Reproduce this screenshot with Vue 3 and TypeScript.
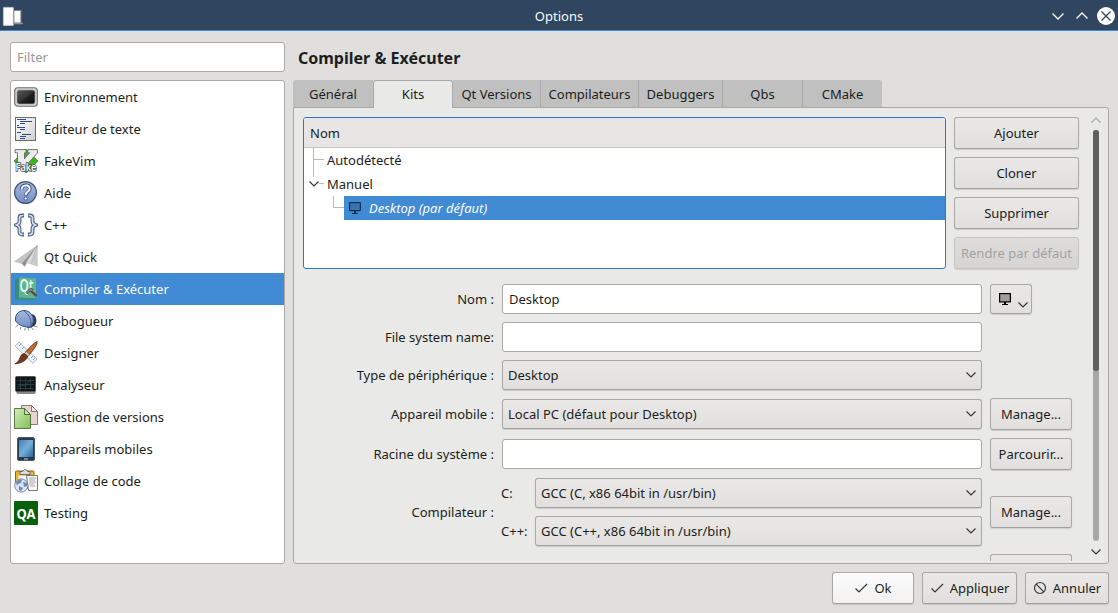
<script setup lang="ts">
import { ref } from 'vue'

interface Category { id: string; label: string }

const categories: Category[] = [
  { id: 'env', label: 'Environnement' },
  { id: 'text', label: 'Éditeur de texte' },
  { id: 'vim', label: 'FakeVim' },
  { id: 'help', label: 'Aide' },
  { id: 'cpp', label: 'C++' },
  { id: 'quick', label: 'Qt Quick' },
  { id: 'build', label: 'Compiler & Exécuter' },
  { id: 'debug', label: 'Débogueur' },
  { id: 'design', label: 'Designer' },
  { id: 'analyze', label: 'Analyseur' },
  { id: 'vcs', label: 'Gestion de versions' },
  { id: 'devices', label: 'Appareils mobiles' },
  { id: 'paste', label: 'Collage de code' },
  { id: 'testing', label: 'Testing' },
]
const selected = ref('build')

const tabs = [
  { label: 'Général', cls: 'w-general' },
  { label: 'Kits', cls: 'w-kits' },
  { label: 'Qt Versions', cls: 'w-qt' },
  { label: 'Compilateurs', cls: 'w-comp' },
  { label: 'Debuggers', cls: 'w-debug' },
  { label: 'Qbs', cls: 'w-qbs' },
  { label: 'CMake', cls: 'w-cmake' },
]
const activeTab = ref('Kits')
const filter = ref('')
const kitName = ref('Desktop')
const fsName = ref('')
const sysroot = ref('')
</script>

<template>
  <div class="window">
    <svg class="defs" width="0" height="0">
      <defs>
        <linearGradient id="gDark" x1="0" y1="0" x2="1" y2="1"><stop offset="0" stop-color="#5a5a5a" /><stop offset=".5" stop-color="#333" /><stop offset=".55" stop-color="#222" /><stop offset="1" stop-color="#0c0c0c" /></linearGradient>
        <linearGradient id="gBlue" x1="0" y1="0" x2="0" y2="1"><stop offset="0" stop-color="#a9bbdd" /><stop offset="1" stop-color="#728fc4" /></linearGradient>
        <linearGradient id="gPaper" x1="0" y1="0" x2="1" y2="1"><stop offset="0" stop-color="#fff" /><stop offset="1" stop-color="#cfcfcf" /></linearGradient>
        <linearGradient id="gGreen" x1="0" y1="0" x2="1" y2="1"><stop offset="0" stop-color="#d5edb8" /><stop offset="1" stop-color="#7fbf55" /></linearGradient>
        <linearGradient id="gScreen" x1="0" y1="0" x2="1" y2="1"><stop offset="0" stop-color="#3f7fb9" /><stop offset=".5" stop-color="#78afd8" /><stop offset="1" stop-color="#2466a4" /></linearGradient>
      </defs>
    </svg>
    <header class="titlebar">
      <svg class="app-icon" width="24" height="22" viewBox="0 0 24 22">
        <rect x="3.400" y="1.400" width="10" height="18" rx=".5" fill="#fcfcfc" stroke="#c9ccd2" stroke-width=".8" />
        <rect x="13.900" y="4.500" width="7" height="12.500" fill="#fcfcfc" stroke="#8a8788" />
        <path d="M13.500 17.500h9.500" stroke="#8b909b" stroke-width="1.500" />
      </svg>
      <span class="title">Options</span>
      <svg class="win-controls" width="68" height="22" viewBox="0 0 68 22" fill="none" stroke="#fcfcfc" stroke-width="1.300">
        <path d="M2.500 8.500l5.500 5.500 5.500-5.500M26.500 13.500L32 8l5.500 5.500" />
        <circle cx="56" cy="11" r="9" fill="#fff" stroke="none" />
        <path d="M51.500 6.500l9 9M60.500 6.500l-9 9" stroke="#2f4560" />
      </svg>
    </header>

    <div class="main">
      <aside class="sidebar">
        <input v-model="filter" class="field" placeholder="Filter" />
        <ul class="categories">
          <li v-for="c in categories" :key="c.id" :class="{ selected: c.id === selected }" @click="selected = c.id">
            <svg width="24" height="24" viewBox="0 0 24 24">
              <g v-if="c.id === 'env'">
                <rect x=".7" y="2.700" width="22.600" height="18.600" rx="3" fill="#d4d4d4" stroke="#6d6d6d" stroke-width="1.100" />
                <rect x="3.200" y="5.200" width="17.600" height="13.600" rx="2" fill="url(#gDark)" stroke="#555" stroke-width=".4" />
              </g>
              <g v-else-if="c.id === 'text'">
                <rect x="1.500" y=".5" width="20" height="23" fill="url(#gPaper)" stroke="#6a6a6a" />
                <path d="M3 2.500h9M6 4.500h12M6 6.500h5M3 8.500h2M3 10.500h8M6 12.500h5M3 15.500h4M8 17.500h9M6 19.500h6M6 21.500h5" stroke="#2f4d8c" />
              </g>
              <g v-else-if="c.id === 'vim'">
                <path d="M12 0l12 12-12 12L0 12z" fill="#43b31b" stroke="#1a7b0c" stroke-width=".6" />
                <path d="M1 .6h11v3.200h-1.500v6L15.500 3.800h-1.700V.6h9.700v3.200L11 18H3.500V3.800H1z" fill="#ececec" stroke="#666" stroke-width=".9" />
                <text x="12" y="21.500" text-anchor="middle" class="fake-text" textLength="21" lengthAdjust="spacingAndGlyphs">Fake</text>
              </g>
              <g v-else-if="c.id === 'help'">
                <circle cx="11.500" cy="11.500" r="10.900" fill="url(#gBlue)" stroke="#45557e" stroke-width="1.200" />
                <path d="M7.500 8.500c0-5.500 8.300-5.500 8.300-.8 0 3-4 3-4 6.800" fill="none" stroke="#34456f" stroke-width="3.600" />
                <path d="M7.700 8.500c0-5.300 8-5.300 8-.8 0 3-4 3-4 6.300" fill="none" stroke="#f0f2f8" stroke-width="2.100" />
                <circle cx="11.700" cy="17.500" r="1.600" fill="#f0f2f8" stroke="#34456f" stroke-width=".8" />
              </g>
              <g v-else-if="c.id === 'cpp'" fill="none">
                <path d="M10 2.500H8.500q-3 0-3 2.500v3.500q0 2.500-3 3.500 3 1 3 3.500V19q0 2.500 3 2.500H10M14 2.500h1.500q3 0 3 2.500v3.500q0 2.500 3 3.500-3 1-3 3.500V19q0 2.500-3 2.500H14" stroke="#43597b" stroke-width="3.800" />
                <path d="M9.500 2.500h-1q-3 0-3 2.500v3.500q0 2.500-3 3.500 3 1 3 3.500V19q0 2.500 3 2.500h1M14.500 2.500h1q3 0 3 2.500v3.500q0 2.500 3 3.500-3 1-3 3.500V19q0 2.500-3 2.500h-1" stroke="#d2deef" stroke-width="1.700" />
              </g>
              <g v-else-if="c.id === 'quick'" stroke="#aaa" stroke-width=".4" stroke-linejoin="round">
                <path d="M23.300.5L.5 16.500l7.500 2z" fill="#c4c4c4" />
                <path d="M23.300.5L8 18.500l2.500 3 2.500-4z" fill="#8c8c8c" />
                <path d="M23.300.5L12 17.500l5 1.500z" fill="#dadada" />
                <path d="M23.300.5L17 19l6.300 2z" fill="#cacaca" />
              </g>
              <g v-else-if="c.id === 'build'">
                <path d="M1 3l4-2.500v20L1 23z" fill="#378b7c" />
                <path d="M1 23l4-2.500 18 1-4 2z" fill="#3d9184" />
                <path d="M5 .5l17 1v19.500L5 20.500z" fill="#5eb78c" />
                <text x="5.500" y="11.500" class="qt-text" textLength="14" lengthAdjust="spacingAndGlyphs">Qt</text>
                <path d="M17 14l5.500 5" stroke="#6b4b40" stroke-width="2.400" />
                <path d="M12 15.500l4.500-4.500 3 1.500-1.500 2-2-.5-2.500 3z" fill="#7d8587" stroke="#3e4648" stroke-width=".7" />
              </g>
              <g v-else-if="c.id === 'debug'">
                <path d="M4 16l-2.500 2M7 18l-1 2.500M11 19v2.500M20 17l3.500 1M17 18l2.500 3M14 19l.5 2.500" stroke="#6a6c73" stroke-width=".8" />
                <path d="M13 19q9 0 9.500-7Q22 5 17 5z" fill="#303849" />
                <path d="M1.500 12Q.5 3 9 1.500q7-.5 10 6.500 1.500 5-2 10Q7 19 1.500 12z" fill="url(#gBlue)" stroke="#3a528a" />
                <path d="M10 2q8 5 7 15.500" fill="none" stroke="#3a528a" stroke-width=".8" />
              </g>
              <g v-else-if="c.id === 'design'">
                <path d="M1 5l4-4 18 17-4 4.500z" fill="#e9eef4" stroke="#a4adbc" stroke-width=".8" />
                <path d="M7 3L5 5M10 6L8 8M13 9l-2 2M19 15l-2 2M21 17l-2 2" stroke="#8090b0" stroke-width=".8" />
                <path d="M23.300.5Q23 5 15 14l-3.500-2.500Q19 2 23.300.5z" fill="#c66c2c" stroke="#532313" stroke-width=".8" />
                <path d="M12.500 10.500l3.300 3-2 2-3.500-3z" fill="#d8c7aa" stroke="#655247" stroke-width=".6" />
                <path d="M10.300 12.500l3.500 3q-2 6-12.800 7.500Q5.500 20 6 16.500q1-3.500 4.300-4z" fill="#743719" stroke="#321b13" stroke-width=".7" />
              </g>
              <g v-else-if="c.id === 'analyze'">
                <path d="M2 18.500h20l-1 2.500H3z" fill="#888" /><rect x="1.500" y="3.500" width="20" height="15" rx="1" fill="#101416" stroke="#555" />
                <path d="M3 7.500h17M3 11.500h17M3 15.500h17M6.500 5v12M11.500 5v12M16.500 5v12" stroke="#33505c" stroke-width=".6" />
                <path d="M3 14l5-2 3 1 4-5 5-1" fill="none" stroke="#4d6268" stroke-width=".5" />
              </g>
              <g v-else-if="c.id === 'vcs'" stroke-width=".9">
                <path d="M7.500.5h10l6 6v13h-16z" fill="#ead3d3" stroke="#806c6c" />
                <path d="M17.500.5v6h6z" fill="#f6eaea" stroke="#806c6c" />
                <path d="M.5 3.500h10l6 6v14H.5z" fill="url(#gGreen)" stroke="#4b6d39" />
                <path d="M10.500 3.500v6h6z" fill="#c9e9ad" stroke="#3f602e" />
              </g>
              <g v-else-if="c.id === 'devices'">
                <rect x="3.500" y=".5" width="17" height="23" rx="1.500" fill="#273a4d" stroke="#4d5a66" />
                <rect x="5" y="3" width="14" height="17" fill="url(#gScreen)" /><path d="M10 22h4" stroke="#c5ced7" />
              </g>
              <g v-else-if="c.id === 'paste'">
                <rect x="1.500" y="2" width="18.500" height="17" rx="1" fill="#e9b72c" stroke="#8e6519" />
                <rect x="4.500" y="6.500" width="12" height="8" fill="#f2f2f2" />
                <path d="M6 2.500h2.500q2.500-4 5 0H16v3H6z" fill="#ddd" stroke="#555" stroke-width=".8" />
                <path d="M12.500 6.500h11v15h-9z" fill="#f6f6f6" stroke="#777" />
                <path d="M15 9h7M15 11h6M15 13h7M15 15h5M16 17h5" stroke="#888" stroke-width=".7" />
                <circle cx="7.200" cy="16.500" r="6.600" fill="#dce5f3" stroke="#60799e" stroke-width=".8" />
                <path d="M2 13l4-3 2 1-1 3-3 1-1 2zM9 13l4 1v3l-3 1zM5 17l4 2-2 3-2-1z" fill="#6e88b5" />
              </g>
              <g v-else>
                <rect width="24" height="24" rx="1" fill="#06600e" /><text x="12" y="17.500" text-anchor="middle" class="qa-text" textLength="19" lengthAdjust="spacingAndGlyphs">QA</text>
              </g>
            </svg>
            <span>{{ c.label }}</span>
          </li>
        </ul>
      </aside>

      <section class="content">
        <h1>Compiler &amp; Exécuter</h1>
        <nav class="tabs">
          <button v-for="t in tabs" :key="t.label" :class="[t.cls, { active: t.label === activeTab }]" @click="activeTab = t.label">{{ t.label }}</button>
        </nav>
        <div class="page">
          <div class="viewport">
            <div class="kits">
              <div class="tree">
                <div class="tree-head">Nom</div>
                <div class="tree-body">
                  <div class="row">
                    <svg width="23" height="24" fill="none" stroke="#b9b9b8"><path d="M9.500 0v24M10 11.500h10" /></svg>Autodétecté
                  </div>
                  <div class="row">
                    <svg width="23" height="24" fill="none" stroke="#b9b9b8"><path d="M9.500 0v5M15 11.500h5" /><path d="M5.500 9.500L10 14l4.500-4.500" stroke="#33373a" stroke-width="1.200" /></svg>Manuel
                  </div>
                  <div class="row">
                    <svg width="40" height="24" fill="none" stroke="#b9b9b8"><path d="M29.500 0v11.500H40" /></svg>
                    <div class="row-selected">
                      <svg width="13" height="13" viewBox="0 0 13 13"><rect x=".6" y=".6" width="10.800" height="8" rx=".5" fill="#3674b5" stroke="#17304c" stroke-width="1.200" /><path d="M5 9h2v2h2v1H3v-1h2z" fill="#17304c" /></svg>
                      <em>Desktop (par défaut)</em>
                    </div>
                  </div>
                </div>
              </div>
              <div class="kit-actions">
                <button class="btn">Ajouter</button>
                <button class="btn">Cloner</button>
                <button class="btn">Supprimer</button>
                <button class="btn" disabled>Rendre par défaut</button>
              </div>
            </div>

            <div class="form">
              <label>Nom :</label>
              <input v-model="kitName" class="field" />
              <button class="btn icon-btn">
                <svg width="40" height="28" viewBox="0 0 40 28"><rect x="8.600" y="8.600" width="10.800" height="8.300" fill="#9e9e9e" stroke="#000" stroke-width="1.200" /><path d="M13 17h2v2h2v1h-6v-1h2z" /><path d="M27.500 17.500L32 22l4.500-4.500" fill="none" stroke="#33373a" stroke-width="1.200" /></svg>
              </button>

              <label>File system name:</label>
              <input v-model="fsName" class="field" />
              <span></span>

              <label>Type de périphérique :</label>
              <div class="combo"><span>Desktop</span><svg width="12" height="8"><path d="M1.500 1.500L6 6l4.500-4.500" /></svg></div>
              <span></span>

              <label>Appareil mobile :</label>
              <div class="combo"><span>Local PC (défaut pour Desktop)</span><svg width="12" height="8"><path d="M1.500 1.500L6 6l4.500-4.500" /></svg></div>
              <button class="btn">Manage...</button>

              <label>Racine du système :</label>
              <input v-model="sysroot" class="field" />
              <button class="btn">Parcourir...</button>

              <label>Compilateur :</label>
              <div class="compilers">
                <span>C:</span>
                <div class="combo"><span>GCC (C, x86 64bit in /usr/bin)</span><svg width="12" height="8"><path d="M1.500 1.500L6 6l4.500-4.500" /></svg></div>
                <span>C++:</span>
                <div class="combo"><span>GCC (C++, x86 64bit in /usr/bin)</span><svg width="12" height="8"><path d="M1.500 1.500L6 6l4.500-4.500" /></svg></div>
              </div>
              <button class="btn">Manage...</button>

              <span></span><span></span>
              <button class="btn"></button>
            </div>
          </div>
          <div class="scrollbar">
            <svg width="12" height="8" class="dim"><path d="M1.500 6.500L6 2l4.500 4.500" /></svg>
            <div class="track"><div class="thumb"></div></div>
            <svg width="12" height="8"><path d="M1.500 1.500L6 6l4.500-4.500" /></svg>
          </div>
        </div>
      </section>
    </div>

    <footer class="actions">
      <button class="btn ok"><svg width="14" height="14"><path d="M1.500 7.500l3.500 3.500 8-8" /></svg>Ok</button>
      <button class="btn apply"><svg width="14" height="14"><path d="M1.500 7.500l3.500 3.500 8-8" /></svg>Appliquer</button>
      <button class="btn cancel"><svg width="14" height="14"><circle cx="7" cy="7" r="5.500" /><path d="M3.200 3.200l7.600 7.600" /></svg>Annuler</button>
    </footer>
  </div>
</template>

<style>
html, body { margin: 0; overflow: hidden; }
</style>

<style scoped>
* { box-sizing: border-box; }
.window {
  width: 1118px; height: 613px; display: flex; flex-direction: column; overflow: hidden;
  background: #e0dfdd; color: #1b1e20; font: 13px/18px "Noto Sans", sans-serif;
}
.defs { display: block; flex: none; }
button, input { font: inherit; color: inherit; }
.titlebar {
  height: 31px; flex: none; display: grid; grid-template-columns: 68px 1fr 68px; align-items: start;
  background: #2f4560; border-bottom: 1px solid #3f89d6; color: #fcfcfc;
}
.app-icon { margin-top: 6px; }
.title { text-align: center; padding-top: 7px; }
.win-controls { margin-top: 5px; }
.main { display: flex; gap: 8px; height: 533px; padding: 11px 9px 0 10px; flex: none; }
.sidebar { width: 275px; display: flex; flex-direction: column; gap: 8px; }
.field {
  width: 100%; height: 30px; padding: 0 6px; border: 1px solid #a9a8a7; border-radius: 3px;
  background: #fff; outline: none; min-width: 0;
}
.field::placeholder { color: #979797; opacity: 1; }
.categories {
  list-style: none; margin: 0; padding: 0; flex: 1; background: #fff;
  border: 1px solid #a9a8a7; border-radius: 3px;
}
.categories li { height: 32px; display: flex; align-items: center; gap: 6px; padding-left: 3px; }
.categories li.selected { background: #418bd4; color: #fcfcfc; }
.fake-text { font: 500 10px "Noto Sans", sans-serif; fill: #fff; stroke: #555; stroke-width: 1.6px; paint-order: stroke; }
.qt-text { font: 600 14px "Noto Sans", sans-serif; fill: #e8f6f0; transform: scaleY(1.3); }
.qa-text { font: bold 15px "Noto Sans", sans-serif; fill: #fff; }

.content { width: 816px; display: flex; flex-direction: column; }
h1 { margin: 0; height: 38px; padding: 5px 0 0 5px; font-size: 16px; line-height: 22px; font-weight: 700; }
.tabs { display: flex; height: 28px; margin-bottom: -1px; z-index: 1; }
.tabs button {
  height: 27px; padding: 1px 0 0; border: 0; border-right: 1px solid #a9a8a7; background: #c1c0c0; text-align: center;
}
.tabs button:first-child { border-radius: 3px 0 0; border-right: 0; }
.tabs button:last-child { border-radius: 0 3px 0 0; border-right: 0; }
.tabs button.active {
  height: 28px; padding: 0 0 2px; background: #e9e9e7; border: 1px solid #a9a8a7; border-bottom: 0; border-radius: 3px 3px 0 0;
}
.tabs .w-general { width: 80px; }
.tabs .w-kits { width: 80px; }
.tabs .w-qt { width: 88px; }
.tabs .w-comp { width: 98px; }
.tabs .w-debug { width: 84px; }
.tabs .w-qbs { width: 80px; }
.tabs .w-cmake { width: 79px; }
.page {
  flex: 1; display: flex; padding: 9px 5px 2px 9px; background: #e9e9e7;
  border: 1px solid #a9a8a7; border-radius: 0 3px 3px 3px; min-height: 0;
}
.viewport { width: 778px; overflow: hidden; }
.kits { display: flex; gap: 8px; }
.tree { width: 643px; height: 152px; background: #fff; border: 1px solid #2f76c4; border-radius: 3px; overflow: hidden; }
.tree-head { height: 30px; padding: 6px; background: #e8e6e5; border-bottom: 1px solid #c6c5c4; }
.row { height: 24px; display: flex; align-items: center; }
.row > svg { flex: none; }
.row-selected { flex: 1; height: 24px; display: flex; align-items: center; gap: 7px; padding-left: 5px; background: #418bd4; color: #fcfcfc; }
.kit-actions { width: 125px; display: flex; flex-direction: column; gap: 8px; }
.btn {
  height: 32px; padding: 0; display: flex; align-items: center; justify-content: center; white-space: nowrap;
  border: 1px solid #a9a8a7; border-bottom-color: #a1a09f; border-radius: 3px;
  background: linear-gradient(#e9e8e7, #e1e0df); box-shadow: 0 1px 1px rgba(0, 0, 0, .12);
}
.btn:disabled { color: #a3a2a1; border-color: #c5c4c3; background: linear-gradient(#dddcdb, #d6d5d4); }
.form {
  margin-top: 15px; display: grid; grid-template-columns: 191px 480px 82px; column-gap: 8px;
  grid-template-rows: 30px 30px 30px 32px 32px 68px 32px; align-items: center;
  row-gap: 8px;
}
.form label { text-align: right; }
.icon-btn { width: 42px; height: 30px; }
.combo {
  height: 30px; padding: 0 4px 0 5px; display: flex; align-items: center; justify-content: space-between;
  border: 1px solid #a9a8a7; border-bottom-color: #a1a09f; border-radius: 3px;
  background: linear-gradient(#e9e8e7, #e1e0df); box-shadow: 0 1px 1px rgba(0, 0, 0, .12);
}
.combo svg, .scrollbar svg { fill: none; stroke: #33373a; stroke-width: 1.2; flex: none; }
.compilers { display: grid; grid-template-columns: 34px 447px; row-gap: 8px; align-items: center; margin-left: -1px; }
.scrollbar { width: 13px; margin-left: 8px; padding: 0 0 5px; display: flex; flex-direction: column; align-items: center; }
.scrollbar .dim { stroke: #a9a9a8; margin-top: -1px; margin-bottom: 1px; }
.track { width: 6px; flex: 1; margin: 5px 0 7px; border-radius: 3px; background: #a8a8a6; }
.thumb { height: 241px; border-radius: 3px; background: #5e5e5c; }
.actions { display: flex; justify-content: flex-end; gap: 8px; padding: 8px 9px 0 0; }
.actions svg { fill: none; stroke: #33373a; stroke-width: 1.2; margin-right: 6px; }
.ok { width: 82px; background: linear-gradient(#fcfcfc, #f1f1f1); }
.apply { width: 95px; }
.cancel { width: 84px; }
</style>
